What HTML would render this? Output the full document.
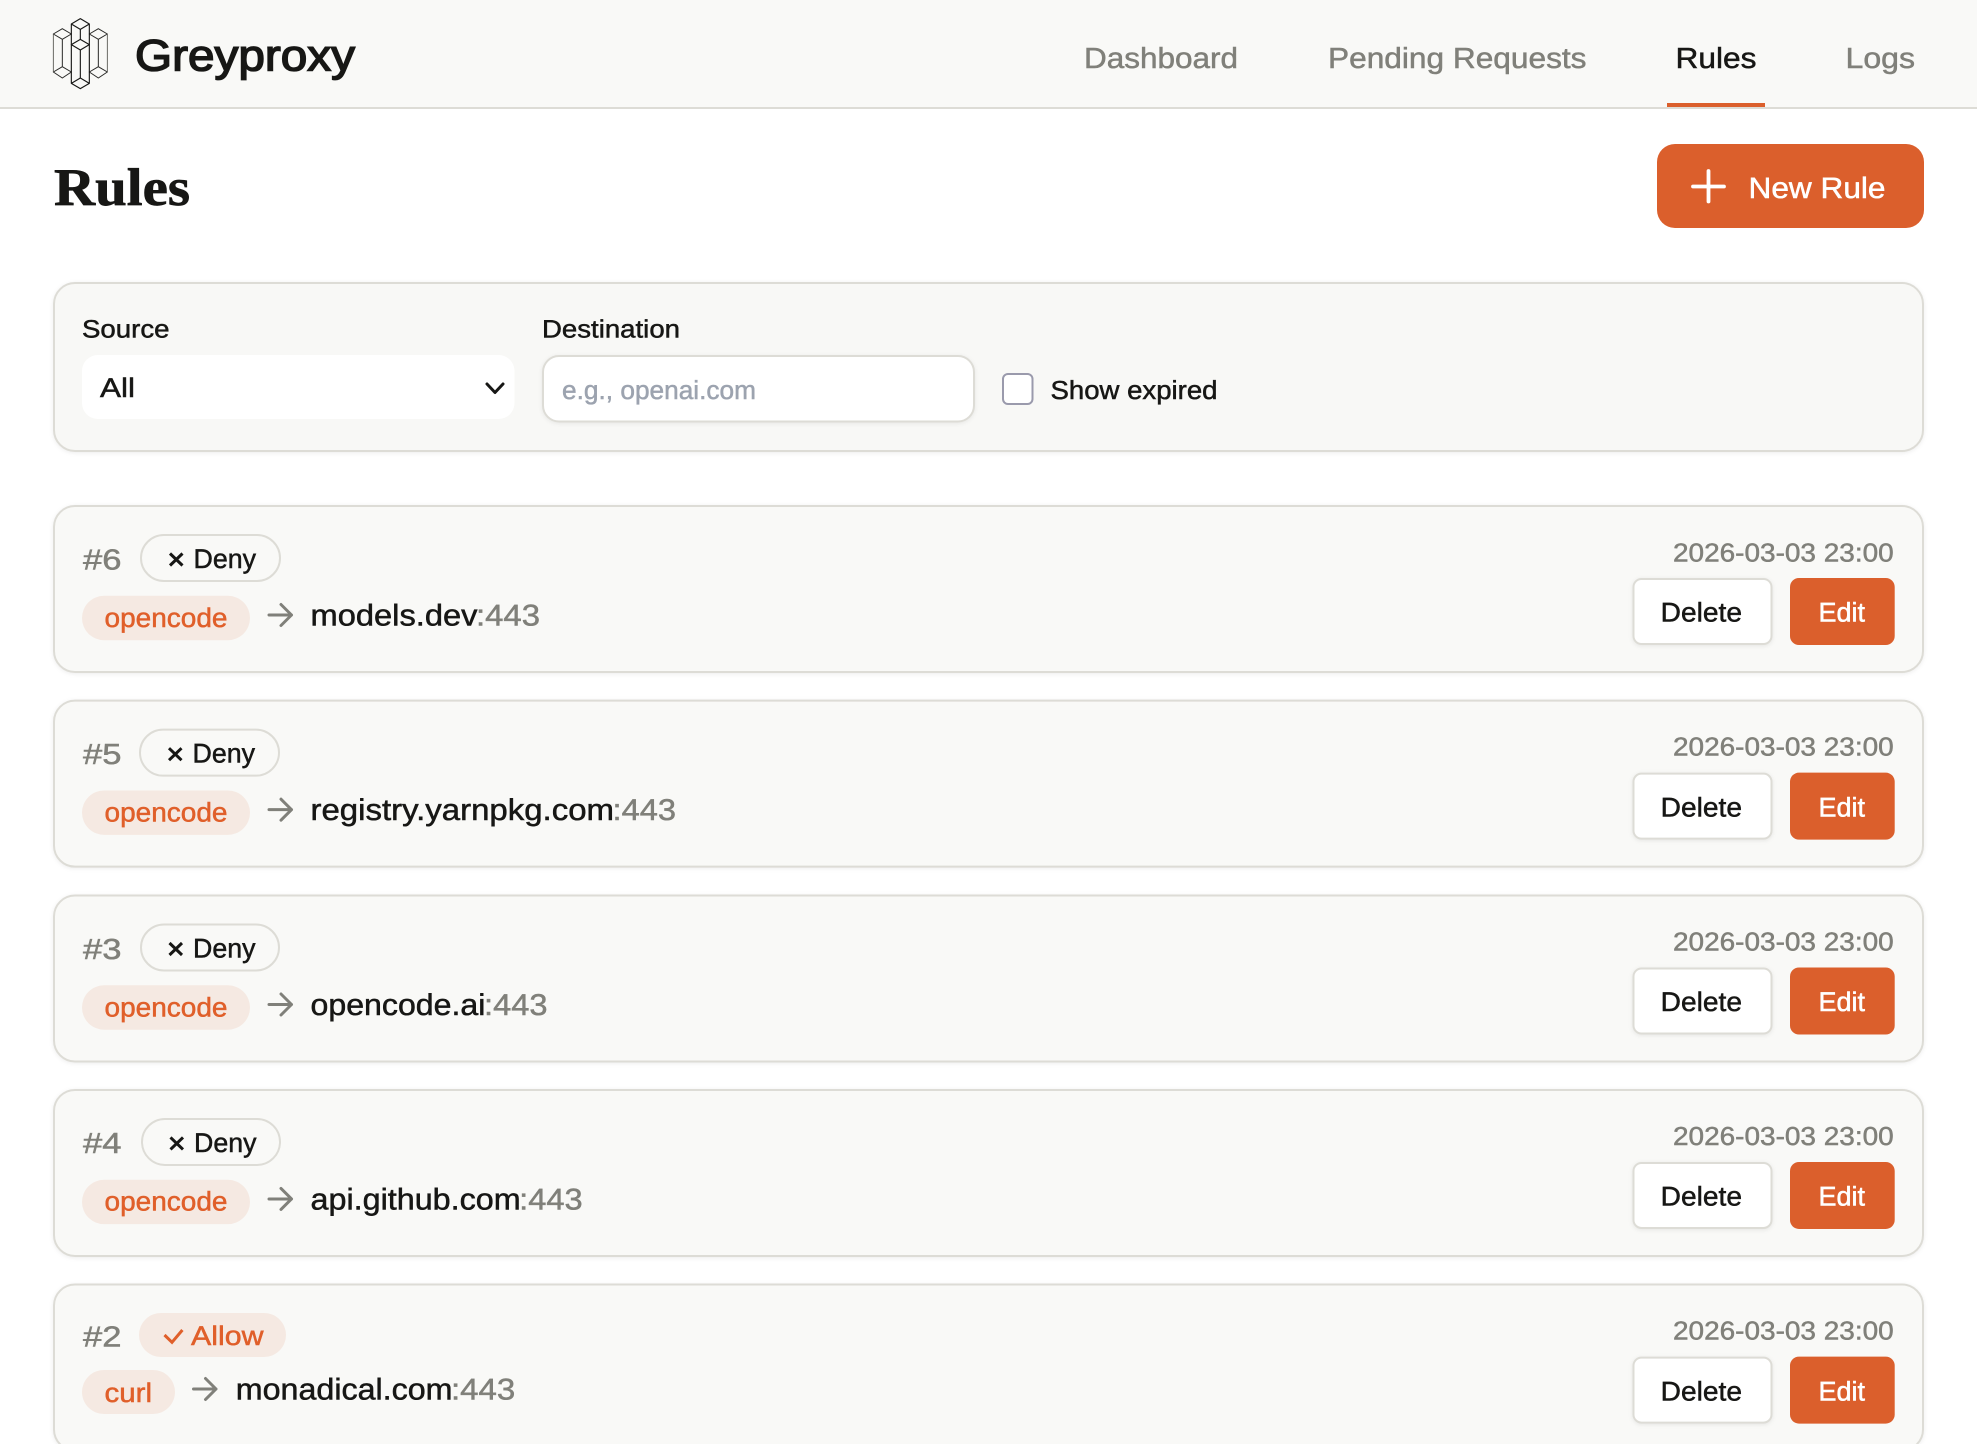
<!DOCTYPE html>
<html lang="en"><head><meta charset="utf-8"><title>Greyproxy Rules</title>
<style>
html,body{margin:0;padding:0;background:#fff;width:1977px;height:1444px;overflow:hidden}
svg{display:block;position:absolute;left:0;top:0}
text{font-family:"Liberation Sans",sans-serif;fill:#171715;stroke:#171715;stroke-width:.5px}
.g{fill:#80807a;stroke:#80807a}
.o{fill:#e05f2a;stroke:#e05f2a}
.w{fill:#fff;stroke:#fff}
.ph{fill:#9ca3af;stroke:#9ca3af}
.card{fill:#f9f9f7;stroke:#dddcd6;stroke-width:2;filter:drop-shadow(0 1px 2px rgba(0,0,0,.07))}
.pill{fill:#f5e9e2}
.del{fill:#fff;stroke:#dddcd6;stroke-width:2;filter:drop-shadow(0 1px 2px rgba(0,0,0,.08))}
.edit{fill:#db5f2c}
.arrow{fill:none;stroke:#80807a;stroke-width:3;stroke-linecap:round;stroke-linejoin:round}
.f27{font-size:27px}.f29{font-size:29px}.f30{font-size:30px}.f26{font-size:26px}
</style></head><body>
<svg width="1977" height="1444" viewBox="0 0 1977 1444" xmlns="http://www.w3.org/2000/svg" text-rendering="geometricPrecision">
<rect width="1977" height="107" fill="#f9f9f7"/>
<rect y="107" width="1977" height="2" fill="#dddcd6"/>

<svg x="40" y="10" width="80" height="85" viewBox="0 0 240 255">
<g fill="none" stroke="#2a2a28" stroke-width="3" stroke-linejoin="round">
<path d="M40 72L67 56L94 72L67 88ZM40 186L67 170L94 186L67 204ZM67 88V170"/>
<path d="M148 72L175 56L202 72L175 88ZM148 186L175 170L202 186L175 204ZM175 88V170"/>
<path d="M40 72V186M202 72V186" stroke="#55554f" stroke-width="2.600"/>
<path d="M94 42L121 26L148 42L121 58ZM94 220L121 204L148 220L121 236ZM94 42V220M148 42V220M121 58V88" stroke="#171715" stroke-width="3.400"/>
<path d="M94 104L121 88L148 104L121 120ZM121 120V204" stroke="#171715" stroke-width="3.400"/>
</g></svg>
<text x="135" y="70.5" font-size="44" textLength="220" lengthAdjust="spacingAndGlyphs" style="stroke-width:1.5px">Greyproxy</text>

<text class="g f29" x="1084" y="68" textLength="154" lengthAdjust="spacingAndGlyphs">Dashboard</text>
<text class="g f29" x="1328" y="68" textLength="258.500" lengthAdjust="spacingAndGlyphs">Pending Requests</text>
<text class="f29" x="1675.500" y="68" textLength="81" lengthAdjust="spacingAndGlyphs">Rules</text>
<text class="g f29" x="1845.500" y="68" textLength="69.500" lengthAdjust="spacingAndGlyphs">Logs</text>
<rect x="1667" y="103" width="98" height="4" fill="#db5f2c"/>

<text x="54" y="205" font-size="53" font-weight="700" textLength="136" lengthAdjust="spacingAndGlyphs" style="font-family:'Liberation Serif',serif;stroke-width:.7px">Rules</text>

<rect x="1657" y="144" width="267" height="84" rx="18" fill="#db5f2c"/>
<path d="M1693 186.500H1724M1708.500 171V201.500" stroke="#fff" stroke-width="3.800" stroke-linecap="round" fill="none"/>
<text class="w" x="1748.500" y="198" font-size="29.500" textLength="137" lengthAdjust="spacingAndGlyphs">New Rule</text>

<!-- filter panel -->
<rect class="card" x="54" y="283" width="1869" height="168" rx="21" style="fill:#f8f8f6"/>
<text x="82" y="337.700" font-size="25" textLength="87.500" lengthAdjust="spacingAndGlyphs">Source</text>
<text x="542" y="337.700" font-size="25" textLength="138" lengthAdjust="spacingAndGlyphs">Destination</text>
<rect x="82" y="355" width="432.500" height="64" rx="16" fill="#fff"/>
<text x="100" y="397" class="f27" textLength="35" lengthAdjust="spacingAndGlyphs">All</text>
<path d="M487 384L495 392.500L503 384" fill="none" stroke="#171715" stroke-width="3" stroke-linecap="round" stroke-linejoin="round"/>
<rect x="543" y="356" width="431" height="65.500" rx="16" fill="#fff" stroke="#dddcd6" stroke-width="2" style="filter:drop-shadow(0 1px 2px rgba(0,0,0,.07))"/>
<text class="ph" x="562" y="399" font-size="26" textLength="194" lengthAdjust="spacingAndGlyphs">e.g., openai.com</text>
<rect x="1003" y="374" width="29.500" height="30" rx="5" fill="#fff" stroke="#9a9aac" stroke-width="2"/>
<text x="1050.500" y="399" font-size="26" textLength="167" lengthAdjust="spacingAndGlyphs">Show expired</text>

<!-- card 6 -->
<rect class="card" x="54" y="506" width="1869" height="166" rx="21"/>
<text class="g f29" x="83" y="569.300" textLength="38.500" lengthAdjust="spacingAndGlyphs">#6</text>
<rect x="141" y="535" width="139" height="46" rx="23" fill="none" stroke="#dddcd6" stroke-width="2"/>
<path d="M170 553.500L182.500 565.500M182.500 553.500L170 565.500" stroke="#171715" stroke-width="3" fill="none"/>
<text class="f27" x="193.500" y="568" textLength="62.500" lengthAdjust="spacingAndGlyphs">Deny</text>
<rect class="pill" x="82" y="595.800" width="168" height="44.400" rx="22.200"/>
<text class="o f27" x="104.500" y="626.800" textLength="123" lengthAdjust="spacingAndGlyphs">opencode</text>
<path class="arrow" d="M269 615H291.500M281 604.500L291.500 615L281 625.500"/>
<text class="f30" x="310.500" y="625.700" textLength="167" lengthAdjust="spacingAndGlyphs">models.dev</text>
<text class="g f30" x="476" y="625.700" textLength="64" lengthAdjust="spacingAndGlyphs">:443</text>
<text class="g f26" x="1673" y="561.500" textLength="220.700" lengthAdjust="spacingAndGlyphs">2026-03-03 23:00</text>
<rect class="del" x="1633.500" y="579" width="138" height="65" rx="8"/>
<text class="f27" x="1660.700" y="621.700" textLength="81.300" lengthAdjust="spacingAndGlyphs">Delete</text>
<rect class="edit" x="1790" y="578" width="104.700" height="67" rx="9"/>
<text class="w f27" x="1818.500" y="621.700" textLength="46.500" lengthAdjust="spacingAndGlyphs">Edit</text>

<!-- card 5 -->
<g transform="translate(0,194.650)">
<rect class="card" x="54" y="506" width="1869" height="166" rx="21"/>
<text class="g f29" x="83" y="569.300" textLength="38.500" lengthAdjust="spacingAndGlyphs">#5</text>
<rect x="140" y="535" width="139" height="46" rx="23" fill="none" stroke="#dddcd6" stroke-width="2"/>
<path d="M169 553.500L181.500 565.500M181.500 553.500L169 565.500" stroke="#171715" stroke-width="3" fill="none"/>
<text class="f27" x="192.500" y="568" textLength="62.500" lengthAdjust="spacingAndGlyphs">Deny</text>
<rect class="pill" x="82" y="595.800" width="168" height="44.400" rx="22.200"/>
<text class="o f27" x="104.500" y="626.800" textLength="123" lengthAdjust="spacingAndGlyphs">opencode</text>
<path class="arrow" d="M269 615H291.500M281 604.500L291.500 615L281 625.500"/>
<text class="f30" x="310.500" y="625.500" textLength="303.500" lengthAdjust="spacingAndGlyphs">registry.yarnpkg.com</text>
<text class="g f30" x="612.500" y="625.500" textLength="63.500" lengthAdjust="spacingAndGlyphs">:443</text>
<text class="g f26" x="1673" y="561" textLength="220.700" lengthAdjust="spacingAndGlyphs">2026-03-03 23:00</text>
<rect class="del" x="1633.500" y="579" width="138" height="65" rx="8"/>
<text class="f27" x="1660.700" y="621.700" textLength="81.300" lengthAdjust="spacingAndGlyphs">Delete</text>
<rect class="edit" x="1790" y="578" width="104.700" height="67" rx="9"/>
<text class="w f27" x="1818.500" y="621.700" textLength="46.500" lengthAdjust="spacingAndGlyphs">Edit</text>
</g>

<!-- card 3 -->
<g transform="translate(0,389.500)">
<rect class="card" x="54" y="506" width="1869" height="166" rx="21"/>
<text class="g f29" x="83" y="569.300" textLength="38.500" lengthAdjust="spacingAndGlyphs">#3</text>
<rect x="141" y="535" width="138" height="46" rx="23" fill="none" stroke="#dddcd6" stroke-width="2"/>
<path d="M169.500 553.500L182 565.500M182 553.500L169.500 565.500" stroke="#171715" stroke-width="3" fill="none"/>
<text class="f27" x="193" y="568" textLength="62.500" lengthAdjust="spacingAndGlyphs">Deny</text>
<rect class="pill" x="82" y="595.800" width="168" height="44.400" rx="22.200"/>
<text class="o f27" x="104.500" y="626.800" textLength="123" lengthAdjust="spacingAndGlyphs">opencode</text>
<path class="arrow" d="M269 615H291.500M281 604.500L291.500 615L281 625.500"/>
<text class="f30" x="310.500" y="625.500" textLength="174.900" lengthAdjust="spacingAndGlyphs">opencode.ai</text>
<text class="g f30" x="484" y="625.500" textLength="63.500" lengthAdjust="spacingAndGlyphs">:443</text>
<text class="g f26" x="1673" y="561" textLength="220.700" lengthAdjust="spacingAndGlyphs">2026-03-03 23:00</text>
<rect class="del" x="1633.500" y="579" width="138" height="65" rx="8"/>
<text class="f27" x="1660.700" y="621.700" textLength="81.300" lengthAdjust="spacingAndGlyphs">Delete</text>
<rect class="edit" x="1790" y="578" width="104.700" height="67" rx="9"/>
<text class="w f27" x="1818.500" y="621.700" textLength="46.500" lengthAdjust="spacingAndGlyphs">Edit</text>
</g>

<!-- card 4 -->
<g transform="translate(0,583.950)">
<rect class="card" x="54" y="506" width="1869" height="166" rx="21"/>
<text class="g f29" x="83" y="569.300" textLength="38.500" lengthAdjust="spacingAndGlyphs">#4</text>
<rect x="142" y="535" width="138" height="46" rx="23" fill="none" stroke="#dddcd6" stroke-width="2"/>
<path d="M170.500 553.500L183 565.500M183 553.500L170.500 565.500" stroke="#171715" stroke-width="3" fill="none"/>
<text class="f27" x="194" y="568" textLength="62.500" lengthAdjust="spacingAndGlyphs">Deny</text>
<rect class="pill" x="82" y="595.800" width="168" height="44.400" rx="22.200"/>
<text class="o f27" x="104.500" y="626.800" textLength="123" lengthAdjust="spacingAndGlyphs">opencode</text>
<path class="arrow" d="M269 615H291.500M281 604.500L291.500 615L281 625.500"/>
<text class="f30" x="310.500" y="625.700" textLength="210.200" lengthAdjust="spacingAndGlyphs">api.github.com</text>
<text class="g f30" x="519.200" y="625.700" textLength="63.500" lengthAdjust="spacingAndGlyphs">:443</text>
<text class="g f26" x="1673" y="561.300" textLength="220.700" lengthAdjust="spacingAndGlyphs">2026-03-03 23:00</text>
<rect class="del" x="1633.500" y="579" width="138" height="65" rx="8"/>
<text class="f27" x="1660.700" y="621.700" textLength="81.300" lengthAdjust="spacingAndGlyphs">Delete</text>
<rect class="edit" x="1790" y="578" width="104.700" height="67" rx="9"/>
<text class="w f27" x="1818.500" y="621.700" textLength="46.500" lengthAdjust="spacingAndGlyphs">Edit</text>
</g>

<!-- card 2 -->
<rect class="card" x="54" y="1284.500" width="1869" height="166" rx="21"/>
<text class="g f29" x="83" y="1346.500" textLength="38.500" lengthAdjust="spacingAndGlyphs">#2</text>
<rect class="pill" x="139" y="1313" width="147" height="44" rx="22"/>
<path d="M164.500 1335L172 1342.300L182.400 1330" fill="none" stroke="#e05f2a" stroke-width="3"/>
<text class="o f27" x="191" y="1345" textLength="72.500" lengthAdjust="spacingAndGlyphs">Allow</text>
<rect class="pill" x="82" y="1370" width="93" height="44" rx="22"/>
<text class="o f27" x="104.500" y="1402" textLength="47.500" lengthAdjust="spacingAndGlyphs">curl</text>
<path class="arrow" d="M193.500 1389H216M205.500 1378.500L216 1389L205.500 1399.500"/>
<text class="f30" x="235.800" y="1399.500" textLength="216.700" lengthAdjust="spacingAndGlyphs">monadical.com</text>
<text class="g f30" x="451" y="1399.500" textLength="64.300" lengthAdjust="spacingAndGlyphs">:443</text>
<g transform="translate(0,778.600)">
<text class="g f26" x="1673" y="561" textLength="220.700" lengthAdjust="spacingAndGlyphs">2026-03-03 23:00</text>
<rect class="del" x="1633.500" y="579" width="138" height="65" rx="8"/>
<text class="f27" x="1660.700" y="621.700" textLength="81.300" lengthAdjust="spacingAndGlyphs">Delete</text>
<rect class="edit" x="1790" y="578" width="104.700" height="67" rx="9"/>
<text class="w f27" x="1818.500" y="621.700" textLength="46.500" lengthAdjust="spacingAndGlyphs">Edit</text>
</g>
</svg>
</body></html>
